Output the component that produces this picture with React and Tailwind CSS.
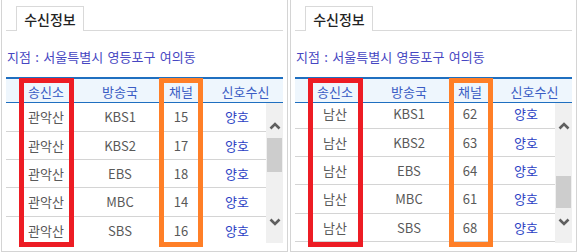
import React from 'react';

const FONT = { fontFamily: '"Noto Sans CJK KR", "Noto Sans", sans-serif' };

const leftRows = [
    { site: '관악산', station: 'KBS1', ch: '15' },
    { site: '관악산', station: 'KBS2', ch: '17' },
    { site: '관악산', station: 'EBS', ch: '18' },
    { site: '관악산', station: 'MBC', ch: '14' },
    { site: '관악산', station: 'SBS', ch: '16' },
];

const rightRows = [
    { site: '남산', station: 'KBS1', ch: '62' },
    { site: '남산', station: 'KBS2', ch: '63' },
    { site: '남산', station: 'EBS', ch: '64' },
    { site: '남산', station: 'MBC', ch: '61' },
    { site: '남산', station: 'SBS', ch: '68' },
];

const rowHeights = ['h-[29px]', 'h-[28px]', 'h-[28px]', 'h-[29px]', 'h-[28px]'];

function Chevron({ up }) {
    return (
        <svg width="12" height="14" viewBox="0 0 12 14" className="mx-auto block">
            <path
                d={up ? 'M1.5 9.5 L6 5 L10.5 9.5' : 'M1.5 4.5 L6 9 L10.5 4.5'}
                fill="none"
                stroke="#5f5f5f"
                strokeWidth="2.6"
            />
        </svg>
    );
}

function Scrollbar({ thumbTop, thumbHeight }) {
    return (
        <div className="w-[17px] h-[140px] bg-[#f0f0f0] flex flex-col">
            <div className="h-[16px]" />
            <Chevron up />
            <div className={thumbTop} />
            <div className={`mx-[1px] bg-[#cdcdcd] ${thumbHeight}`} />
            <div className="flex-1" />
            <Chevron />
            <div className="h-[14px]" />
        </div>
    );
}

function Panel({ rows, shift, thumbTop, thumbHeight, orangeLeft }) {
    return (
        <div className="relative w-[287px] h-[252px] border-l border-r border-b border-[#d4d4d4] px-[4px] pt-[6px]">
            {/* tab */}
            <div className="flex border-b border-[#d9d9d9]">
                <div className="ml-[10px] w-[68px] h-[25px] -mb-px bg-white border border-b-0 border-[#d9d9d9] flex items-center justify-center text-[14px] font-medium text-[#222]">
                    수신정보
                </div>
            </div>

            <div className="h-[46px] pt-[16px] pl-[1px] leading-[20px] text-[13px] text-[#4646c2] [word-spacing:1.5px]">
                지점 : 서울특별시 영등포구 여의동
            </div>

            {/* header */}
            <div className="flex h-[26px] border-t-2 border-b border-[#1f6fc0] bg-[#eef6fd] text-[13px] text-[#3a5cc4]">
                <div className="w-[80px] flex items-center justify-center pt-[2px]">송신소</div>
                <div className="w-[68px] flex items-center justify-center pt-[2px]">방송국</div>
                <div className="w-[54px] flex items-center justify-center pt-[2px]">채널</div>
                <div className="w-[75px] flex items-center justify-center pt-[2px]">신호수신</div>
            </div>

            {/* body */}
            <div className="flex">
                <div className="w-[260px] h-[140px] overflow-hidden">
                    <div className={shift}>
                        {rows.map((r, i) => (
                            <div key={i} className={`flex border-b border-[#d4d4d4] text-[13px] text-[#595959] ${rowHeights[i]}`}>
                                <div className="w-[80px] flex items-center justify-center">{r.site}</div>
                                <div className="w-[68px] flex items-center justify-center">{r.station}</div>
                                <div className="w-[54px] flex items-center justify-center">{r.ch}</div>
                                <div className="w-[58px] flex items-center justify-center text-[#2b3fc4]">양호</div>
                            </div>
                        ))}
                    </div>
                </div>
                <Scrollbar thumbTop={thumbTop} thumbHeight={thumbHeight} />
            </div>

            {/* annotation boxes */}
            <div className="absolute left-[17px] top-[78px] w-[55px] h-[169px] border-[5px] border-[#ed1c24]" />
            <div className={`absolute top-[78px] w-[44px] h-[169px] border-[5px] border-[#ff7f27] ${orangeLeft}`} />
        </div>
    );
}

export default function App() {
    return (
        <div className="w-[578px] h-[252px] bg-white flex gap-[2px] pl-[1px] overflow-hidden" style={FONT}>
            <Panel rows={leftRows} shift="" thumbTop="h-[5px]" thumbHeight="h-[34px]" orangeLeft="left-[157px]" />
            <Panel rows={rightRows} shift="-mt-[3px]" thumbTop="h-[43px]" thumbHeight="h-[32px]" orangeLeft="left-[158px]" />
        </div>
    );
}
